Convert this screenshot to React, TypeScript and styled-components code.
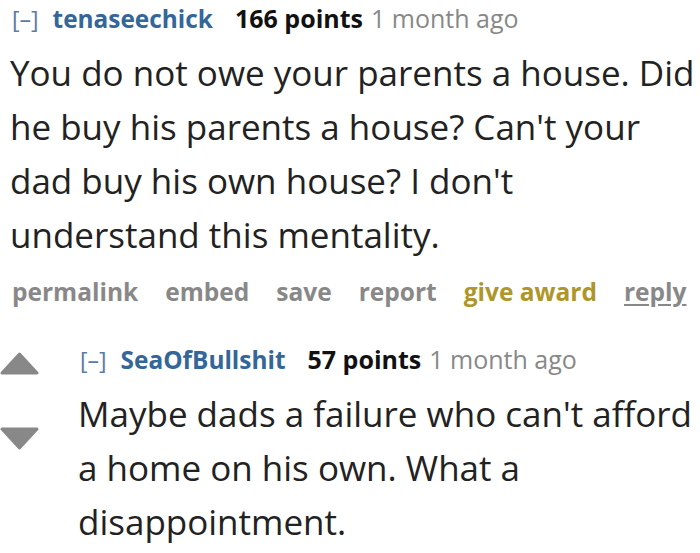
import React from "react";
import styled, { createGlobalStyle } from "styled-components";

const Global = createGlobalStyle`
  html, body { margin: 0; padding: 0; background: #fff; }
  body { font-family: "Open Sans", "Noto Sans", sans-serif; }
`;

const Page = styled.div`
  width: 700px;
  height: 553px;
  overflow: hidden;
  background: #fff;
  padding: 0 0 0 10px;
  box-sizing: border-box;
`;

const Comment = styled.div`
  display: flex;
  flex-direction: column;
`;

const Header = styled.div`
  display: flex;
  align-items: baseline;
  height: 36px;
  font-size: 25px;
  line-height: 36px;
  white-space: nowrap;
`;

const Toggle = styled.span`
  color: #5a7aa8;
  font-weight: 400;
  font-size: 23px;
  margin-right: 14px;
  margin-left: 2px;
`;

const Author = styled.span`
  color: #336699;
  font-weight: 700;
  font-size: 24.4px;
  margin-right: 22px;
`;

const Score = styled.span`
  color: #111;
  font-weight: 700;
  margin-right: 8px;
`;

const Time = styled.span`
  color: #888;
`;

const Body = styled.p`
  margin: 10px 0 0;
  font-size: 35px;
  line-height: 54px;
  color: #222;
`;

const Actions = styled.div`
  display: flex;
  gap: 27px;
  font-size: 24.5px;
  font-weight: 700;
  line-height: 32px;
  margin-top: 14px;
  margin-left: 2px;
`;

const Action = styled.span<{ $tone?: "award" | "reply" }>`
  color: ${(p) => (p.$tone === "award" ? "#ae962a" : "#888")};
  text-decoration: ${(p) => (p.$tone === "reply" ? "underline" : "none")};
  text-underline-offset: 3px;
`;

const Child = styled.div`
  display: flex;
  margin-left: -10px;
  margin-top: 33px;
`;

const Votes = styled.div`
  width: 40px;
  display: flex;
  flex-direction: column;
  gap: 52px;
  padding-top: 11px;
  flex: none;
`;

const Arrow = styled.svg`
  display: block;
  width: 39px;
  height: 23px;
`;

const ChildContent = styled.div`
  margin-left: 38px;
  flex: 1;
`;

export default function App() {
  return (
    <Page>
      <Global />
      <Comment>
        <Header>
          <Toggle>[–]</Toggle>
          <Author>tenaseechick</Author>
          <Score>166 points</Score>
          <Time>1 month ago</Time>
        </Header>
        <Body>
          You do not owe your parents a house. Did he buy his parents a house?
          Can't your dad buy his own house? I don't understand this mentality.
        </Body>
        <Actions>
          <Action>permalink</Action>
          <Action>embed</Action>
          <Action>save</Action>
          <Action>report</Action>
          <Action $tone="award">give award</Action>
          <Action $tone="reply">reply</Action>
        </Actions>
      </Comment>
      <Child>
        <Votes>
          <Arrow viewBox="0 0 39 23">
            <path d="M19.5 2 L37 21 L2 21 Z" fill="#888" stroke="#888" strokeLinejoin="round" strokeWidth="3" />
          </Arrow>
          <Arrow viewBox="0 0 39 23">
            <path d="M2 2 L37 2 L19.5 21 Z" fill="#888" stroke="#888" strokeLinejoin="round" strokeWidth="3" />
          </Arrow>
        </Votes>
        <ChildContent>
          <Comment>
            <Header>
              <Toggle>[–]</Toggle>
              <Author>SeaOfBullshit</Author>
              <Score>57 points</Score>
              <Time>1 month ago</Time>
            </Header>
            <Body>
              Maybe dads a failure who can't afford a home on his own. What a
              disappointment.
            </Body>
          </Comment>
        </ChildContent>
      </Child>
    </Page>
  );
}
